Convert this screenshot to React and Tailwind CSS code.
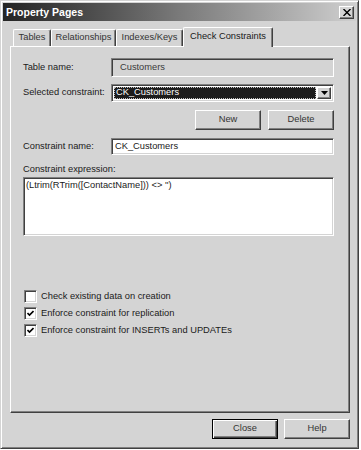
const sunken = "border border-t-[#808080] border-l-[#808080] border-b-white border-r-white shadow-[inset_1px_1px_0_#404040,inset_-1px_-1px_0_#d4d4d4]";
const raised = "border border-t-white border-l-white border-b-[#404040] border-r-[#404040] shadow-[inset_-1px_-1px_0_#808080]";

const Tab = ({ label, w, active }) => (
    active ? (
        <div className="h-[20px] -mb-px z-10 bg-[#d4d4d4] border-t border-l border-t-white border-l-white border-r border-r-[#404040] shadow-[inset_-1px_0_0_#808080] rounded-t-[2px] flex items-center justify-center pb-[2px]" style={{ width: w }}>
            {label}
        </div>
    ) : (
        <div className="h-[17px] bg-[#d4d4d4] border-t border-l border-t-white border-l-white border-r border-r-[#404040] shadow-[inset_-1px_0_0_#808080] rounded-t-[2px] flex items-center justify-center text-[#333]" style={{ width: w }}>
            {label}
        </div>
    )
);

const Check = ({ checked, label }) => (
    <div className="h-[17px] flex items-center">
        <div className={`w-[13px] h-[13px] bg-white ${sunken} flex items-center justify-center`}>
            {checked && (
                <svg width="7" height="7" viewBox="0 0 7 7">
                    <path d="M0.5 3 L2.5 5 L6.5 1" stroke="#000" strokeWidth="1.6" fill="none" />
                </svg>
            )}
        </div>
        <span className="ml-[4px]">{label}</span>
    </div>
);

export default function App() {
    return (
        <div className="w-[361px] h-[450px] bg-white font-['Liberation_Sans',Arial,sans-serif] text-[9.3px] leading-none text-[#1a1a1a]">
            <div className="w-[359px] h-[449px] bg-[#d4d4d4] border border-t-[#d4d4d4] border-l-[#d4d4d4] border-b-[#404040] border-r-[#404040] shadow-[inset_1px_1px_0_#fff,inset_-1px_-1px_0_#808080] p-[2px] flex flex-col">
                {/* Title bar */}
                <div className="h-[18px] bg-linear-to-r from-[#242424] via-[#7a7a7a] to-[#cfcfcf] flex items-center justify-between pl-[3px] pr-[2px]">
                    <span className="text-white font-bold text-[10.5px]">Property Pages</span>
                    <div className={`w-[15px] h-[13px] bg-[#d4d4d4] ${raised} flex items-center justify-center`}>
                        <svg width="8" height="7" viewBox="0 0 8 7">
                            <path d="M0.5 0 L7.5 7 M7.5 0 L0.5 7" stroke="#000" strokeWidth="1.4" />
                        </svg>
                    </div>
                </div>

                <div className="pl-[7px] pt-[6px]">
                    {/* Tabs */}
                    <div className="flex items-end pl-[3px] h-[19px]">
                        <Tab label="Tables" w={38} />
                        <Tab label="Relationships" w={65} />
                        <Tab label="Indexes/Keys" w={67} />
                        <Tab label="Check Constraints" w={90} active />
                    </div>

                    {/* Panel */}
                    <div className="w-[340px] h-[367px] border border-t-white border-l-white border-b-[#404040] border-r-[#404040] shadow-[inset_-1px_-1px_0_#808080] pl-[12px] flex flex-col">
                        <div className="w-[311px] flex flex-col">
                            <div className="flex items-center mt-[11px]">
                                <span className="w-[88px]">Table name:</span>
                                <div className={`w-[223px] h-[19px] ${sunken} bg-[#d4d4d4] flex items-center pl-[8px] text-[#3a3a3a]`}>Customers</div>
                            </div>

                            <div className="flex items-center mt-[7px]">
                                <span className="w-[88px]">Selected constraint:</span>
                                <div className={`w-[223px] h-[18px] ${sunken} bg-white flex items-stretch p-[2px]`}>
                                    <div className="flex-1 bg-[#1c1c1c] border border-dotted border-[#bdbdbd] text-white flex items-center pl-[1px]">CK_Customers</div>
                                    <div className={`w-[14px] ml-[1px] bg-[#d4d4d4] ${raised} flex items-center justify-center`}>
                                        <svg width="7" height="4" viewBox="0 0 7 4">
                                            <path d="M0 0 H7 L3.5 4 Z" fill="#000" />
                                        </svg>
                                    </div>
                                </div>
                            </div>

                            <div className="flex justify-end gap-[7px] mt-[8px]">
                                <button className={`w-[66px] h-[20px] bg-[#d4d4d4] ${raised} text-[#333]`}>New</button>
                                <button className={`w-[66px] h-[20px] bg-[#d4d4d4] ${raised} text-[#333]`}>Delete</button>
                            </div>

                            <div className="flex items-center mt-[8px]">
                                <span className="w-[88px]">Constraint name:</span>
                                <div className={`w-[223px] h-[17px] ${sunken} bg-white flex items-center pl-[3px]`}>CK_Customers</div>
                            </div>

                            <span className="mt-[10px]">Constraint expression:</span>
                            <div className={`w-[311px] h-[59px] mt-[3px] ${sunken} bg-white pl-[2px] pt-[3px]`}>
                                (Ltrim(RTrim([ContactName])) &lt;&gt; '')
                            </div>

                            <div className="mt-[52px] ml-[1px] flex flex-col">
                                <Check label="Check existing data on creation" />
                                <Check checked label="Enforce constraint for replication" />
                                <Check checked label="Enforce constraint for INSERTs and UPDATEs" />
                            </div>
                        </div>
                    </div>

                    {/* Bottom buttons */}
                    <div className="w-[340px] flex justify-end gap-[6px] mt-[6px]">
                        <button className="w-[66px] h-[20px] bg-[#d4d4d4] border border-black shadow-[inset_1px_1px_0_#fff,inset_-1px_-1px_0_#404040,inset_-2px_-2px_0_#808080] text-[#333]">Close</button>
                        <button className={`w-[66px] h-[20px] bg-[#d4d4d4] ${raised} text-[#333]`}>Help</button>
                    </div>
                </div>
            </div>
        </div>
    );
}
